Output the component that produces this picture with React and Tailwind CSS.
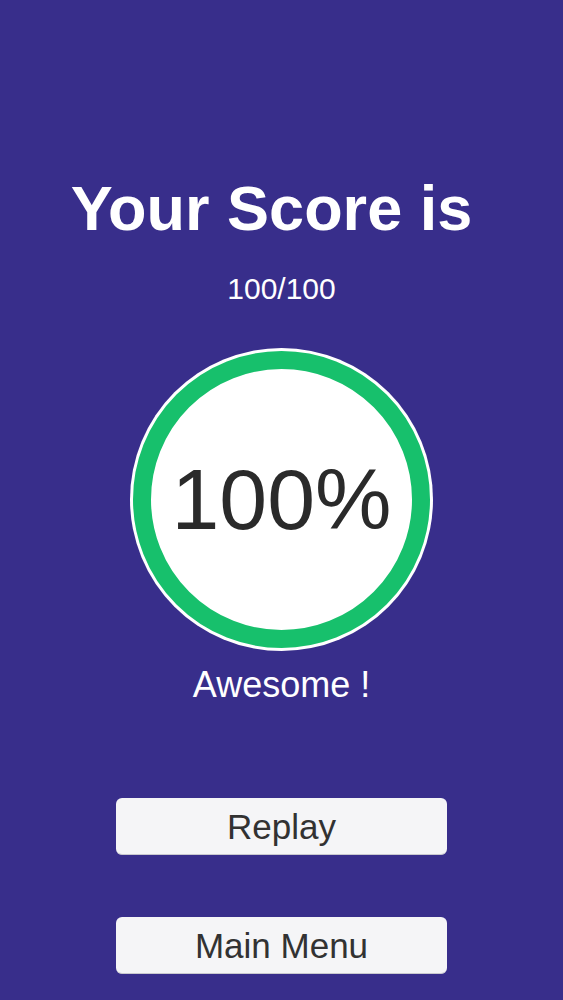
export default function App() {
  return (
    <div className="min-h-[1000px] w-full bg-[#382e8b] flex flex-col items-center pt-[177px]" style={{ fontFamily: '"Liberation Sans", Arial, sans-serif' }}>
      <h1 className="mr-[20px] text-[63px] leading-none font-bold text-white">Your Score is</h1>
      <p className="mt-[34px] text-[30px] leading-none text-white">100/100</p>

      {/* score ring */}
      <div className="mt-[44px] w-[303px] h-[303px] rounded-full bg-white p-[3px]">
        <div className="w-full h-full rounded-full border-[18px] border-[#17c06c] bg-white flex items-center justify-center">
          <span className="text-[86px] leading-none text-[#2a2a2a] -mt-[2px]">100%</span>
        </div>
      </div>

      <p className="mt-[16px] text-[36px] leading-none text-white">Awesome !</p>

      <button type="button" className="mt-[95px] w-[331px] h-[57px] rounded-md bg-[#f5f5f7] border-b border-[#c9c9cf] text-[35px] leading-none text-[#323232] flex items-center justify-center">
        Replay
      </button>
      <button type="button" className="mt-[62px] w-[331px] h-[57px] rounded-md bg-[#f5f5f7] border-b border-[#c9c9cf] text-[35px] leading-none text-[#323232] flex items-center justify-center">
        Main Menu
      </button>
    </div>
  )
}
